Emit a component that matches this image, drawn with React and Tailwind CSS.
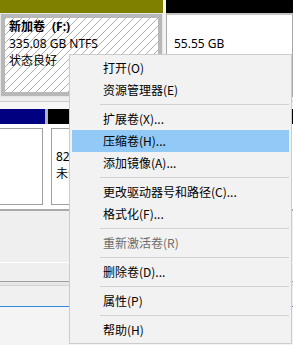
import React from "react";

const items = [
  { t: "打开(O)" },
  { t: "资源管理器(E)" },
  { sep: true },
  { t: "扩展卷(X)..." },
  { t: "压缩卷(H)...", active: true },
  { t: "添加镜像(A)..." },
  { sep: true },
  { t: "更改驱动器号和路径(C)..." },
  { t: "格式化(F)..." },
  { sep: true },
  { t: "重新激活卷(R)", disabled: true },
  { sep: true },
  { t: "删除卷(D)..." },
  { sep: true },
  { t: "属性(P)" },
  { sep: true },
  { t: "帮助(H)" },
];

export default function App() {
  return (
    <div className="relative w-[293px] h-[345px] overflow-hidden bg-[#f0f0f0] text-[12px] text-black font-['Noto_Sans','Noto_Sans_CJK_SC',sans-serif]">
      {/* Disk row 1 */}
      <div className="flex h-[97px] bg-[#f4f4f4]">
        <div className="flex w-[163px] flex-col">
          <div className="h-[13px] bg-[#808000]" />
          <div className="flex-1 border border-[#e6e6e6]">
            <div className="h-full border-[4px] border-[#b8b8b8] bg-white">
              <div className="h-full bg-[repeating-linear-gradient(135deg,#adadad_0px,#adadad_1px,transparent_1px,transparent_5.657px)] pl-[4px] leading-[17px]">
                <div className="font-bold">
                  新加卷<span className="ml-[7px]">(F:)</span>
                </div>
                <div>335.08 GB NTFS</div>
                <div>状态良好</div>
              </div>
            </div>
          </div>
        </div>
        <div className="w-[3px]" />
        <div className="flex flex-1 flex-col">
          <div className="h-[13px] bg-black" />
          <div className="flex-1 border border-[#a8a8a8] border-t-2 border-t-[#c4c4c4] bg-white pl-[7px] pt-[3px] leading-[17px]">
            <div>&nbsp;</div>
            <div>55.55 GB</div>
            <div>未分配</div>
          </div>
        </div>
      </div>

      {/* gap between rows */}
      <div className="flex h-[12px] flex-col bg-[#f7f7f7]">
        <div className="h-[4px] bg-[#eeeeee]" />
        <div className="h-px bg-[#cfcfcf]" />
      </div>

      {/* Disk row 2 */}
      <div className="flex h-[100px] bg-white">
        <div className="flex w-[45px] flex-col">
          <div className="h-[15px] bg-[#000080]" />
          <div className="flex-1 pb-[4px] pr-[2px] pt-[4px]">
            <div className="h-full border-b border-r border-t border-[#a0a0a0]" />
          </div>
        </div>
        <div className="flex w-[3px] flex-col">
          <div className="h-[15px] bg-[#b4b4b4]" />
        </div>
        <div className="flex flex-1 flex-col">
          <div className="h-[15px] bg-black" />
          <div className="flex-1 pb-[4px] pl-[3px] pr-[2px] pt-[4px]">
            <div className="h-full border border-[#a0a0a0] pl-[4px] pt-[2px] leading-[17px]">
              <div>&nbsp;</div>
              <div>82.00 GB</div>
              <div>未分配</div>
            </div>
          </div>
        </div>
      </div>

      {/* lower area */}
      <div className="h-[2px] bg-[#a9a9a9]" />
      <div className="h-[51px] bg-[#efefef]" />
      <div className="h-px bg-white" />
      <div className="h-[18px] bg-[#efefef]" />
      <div className="h-px bg-[#a0a0a0]" />
      <div className="h-[3px] bg-[#e8e8e8]" />
      <div className="h-px bg-[#d4d4d4]" />
      <div className="h-[20px] bg-[#f0f0f0]" />
      <div className="h-px bg-[#2f8ae0]" />
      <div className="h-[38px] bg-[#f4f4f4]" />

      {/* Context menu */}
      <div className="absolute left-[69px] top-[54px] w-[223px] h-[290px] border border-[#cccccc] bg-[#f2f2f2] p-[2px] font-['Noto_Sans_CJK_SC','Noto_Sans',sans-serif]">
        {items.map((it, i) =>
          it.sep ? (
            <div key={i} className="flex h-[7px] items-center pl-[28px]">
              <div className="h-px flex-1 bg-[#d2d2d2]" />
            </div>
          ) : (
            <div
              key={i}
              className={
                "h-[22px] pl-[31px] leading-[22px] whitespace-nowrap " +
                (it.active ? "bg-[#91c9f7] " : "") +
                (it.disabled ? "text-[#6d6d6d]" : "text-black")
              }
            >
              {it.t}
            </div>
          )
        )}
      </div>
    </div>
  );
}
